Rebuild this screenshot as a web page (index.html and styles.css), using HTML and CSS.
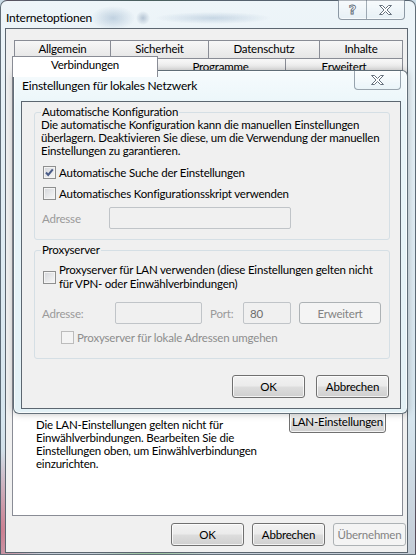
FILE: index.html
```html
<!DOCTYPE html>
<html lang="de">
  <head>
    <meta charset="UTF-8" />
    <title>Internetoptionen</title>
    <link rel="stylesheet" href="styles.css">
  </head>
  <body>
    <div class="window main-window">
      <div class="titlebar">
        <span class="title">Internetoptionen</span>
        <div class="caption-buttons">
          <span class="cap-btn help-btn">?</span>
          <span class="cap-btn close-btn">
            <svg width="13" height="10" viewBox="0 0 13 10"><path d="M0.5 0.5h3l3 3 3-3h3l-4.5 4.5 4.5 4.5h-3l-3-3-3 3h-3l4.5-4.5z" /></svg>
          </span>
        </div>
      </div>
      <div class="client main-client">
        <div class="tab-row row-top">
          <div class="tab t-allgemein">Allgemein</div>
          <div class="tab t-sicherheit">Sicherheit</div>
          <div class="tab t-datenschutz">Datenschutz</div>
          <div class="tab t-inhalte">Inhalte</div>
        </div>
        <div class="tab-row row-bottom">
          <div class="tab active t-verbindungen">Verbindungen</div>
          <div class="tab t-programme">Programme</div>
          <div class="tab t-erweitert">Erweitert</div>
        </div>
        <div class="tab-panel">
          <div class="lan-row">
            <p>Die LAN-Einstellungen gelten nicht für<br>Einwählverbindungen. Bearbeiten Sie die<br>Einstellungen oben, um Einwählverbindungen<br>einzurichten.</p>
            <button class="btn lan-btn">LAN-Einstellungen</button>
          </div>
        </div>
        <div class="button-bar">
          <button class="btn">OK</button>
          <button class="btn">Abbrechen</button>
          <button class="btn" disabled>Übernehmen</button>
        </div>
      </div>
    </div>

    <div class="window lan-dialog">
      <div class="titlebar">
        <span class="title">Einstellungen für lokales Netzwerk</span>
        <span class="lan-close">
          <svg width="13" height="10" viewBox="0 0 13 10"><path d="M0.5 0.5h3l3 3 3-3h3l-4.5 4.5 4.5 4.5h-3l-3-3-3 3h-3l4.5-4.5z" /></svg>
        </span>
      </div>
      <div class="client lan-client">
        <fieldset class="group group-auto">
          <legend>Automatische Konfiguration</legend>
          <p class="desc">Die automatische Konfiguration kann die manuellen Einstellungen<br>überlagern. Deaktivieren Sie diese, um die Verwendung der manuellen<br>Einstellungen zu garantieren.</p>
          <label class="check first">
            <span class="box"><svg width="11" height="11" viewBox="0 0 11 11"><path d="M2 5.5l2.2 2.4 4.6-5.6" /></svg></span>
            <span>Automatische Suche der Einstellungen</span>
          </label>
          <label class="check">
            <span class="box"></span>
            <span>Automatisches Konfigurationsskript verwenden</span>
          </label>
          <div class="field-row">
            <span class="field-label label-script">Adresse</span>
            <input class="field input-script" type="text" disabled>
          </div>
        </fieldset>

        <fieldset class="group group-proxy">
          <legend>Proxyserver</legend>
          <label class="check proxy-check">
            <span class="box"></span>
            <span>Proxyserver für LAN verwenden (diese Einstellungen gelten nicht<br>für VPN- oder Einwählverbindungen)</span>
          </label>
          <div class="field-row proxy-row">
            <span class="field-label label-proxy">Adresse:</span>
            <input class="field input-proxy" type="text" disabled>
            <span class="field-label label-port">Port:</span>
            <input class="field input-port" type="text" value="80" disabled>
            <button class="btn btn-advanced" disabled>Erweitert</button>
          </div>
          <label class="check bypass-check disabled">
            <span class="box"></span>
            <span>Proxyserver für lokale Adressen umgehen</span>
          </label>
        </fieldset>

        <div class="button-bar lan-buttons">
          <button class="btn">OK</button>
          <button class="btn">Abbrechen</button>
        </div>
      </div>
    </div>
  </body>
</html>
```

FILE: styles.css
```css
body {
  margin: 0;
  width: 416px;
  height: 555px;
  overflow: hidden;
  position: relative;
  background: #c9dbe6;
  font-family: Lato, 'Liberation Sans', sans-serif;
  font-size: 11.5px;
  letter-spacing: -0.2px;
  color: #000;
}

.window {
  box-sizing: border-box;
  display: flex;
  flex-direction: column;
  border: 1px solid rgba(38, 52, 66, 0.7);
}

/* glass frame of the main window */
.main-window {
  height: 555px;
  border-radius: 7px 7px 0 0;
  background:
    radial-gradient(ellipse 22px 12px at 112px 17px, rgba(110, 145, 180, 0.35), transparent),
    radial-gradient(ellipse 7px 7px at 142px 17px, rgba(80, 110, 145, 0.35), transparent),
    radial-gradient(ellipse 58px 6px at 212px 17px, rgba(110, 145, 180, 0.3), transparent),
    radial-gradient(ellipse 40px 80px at 0 530px, rgba(205, 105, 125, 0.8), transparent),
    radial-gradient(ellipse 60px 10px at 150px 555px, rgba(120, 190, 110, 0.7), transparent),
    linear-gradient(to bottom, #eef5f9 0, #e4eff5 120px, #d6e5ee 420px, #c4ccd6 555px);
}

.titlebar {
  display: flex;
  align-items: flex-start;
  flex: none;
}

.title {
  flex: 1;
  line-height: 15px;
  font-size: 12px;
}

.main-window .titlebar {
  height: 27px;
  padding-left: 5px;
}

.main-window .title {
  margin-top: 9px;
}

.caption-buttons {
  display: flex;
  margin: -1px 10px 0 0;
  border: 1px solid rgba(60, 78, 96, 0.55);
  border-top: none;
  border-radius: 0 0 4px 4px;
  background: linear-gradient(rgba(255, 255, 255, 0.55), rgba(225, 236, 243, 0.45));
  box-shadow: inset 0 -1px 0 rgba(255, 255, 255, 0.6);
}

.cap-btn {
  height: 19px;
  display: flex;
  align-items: center;
  justify-content: center;
}

.help-btn {
  width: 27px;
  border-right: 1px solid rgba(60, 78, 96, 0.45);
  color: #fff;
  font-family: 'DejaVu Sans', sans-serif;
  font-weight: bold;
  font-size: 13px;
  -webkit-text-stroke: 0.8px #5d6a77;
}

.close-btn {
  width: 37px;
}

.caption-buttons svg path,
.lan-close svg path {
  fill: #fff;
  stroke: #66717d;
  stroke-width: 1;
  stroke-linejoin: round;
}

.client {
  flex: 1;
  min-height: 0;
  overflow: hidden;
  display: flex;
  flex-direction: column;
  border: 1px solid #5c6670;
  background: #f0f0f0;
}

.main-client {
  margin: 0 7px 1px 4px;
  padding: 11px 4px 6px 6px;
}

/* tabs */
.tab-row {
  display: flex;
  align-items: flex-start;
  height: 18px;
  flex: none;
}

.row-top {
  margin-left: 2px;
}

.tab {
  box-sizing: border-box;
  height: 18px;
  border: 1px solid #898c95;
  border-bottom: none;
  margin-left: -1px;
  line-height: 16px;
  text-align: center;
  background: linear-gradient(#f7f7f7, #e6e6e6);
}

.t-allgemein { width: 97px; margin-left: 0; }
.t-sicherheit { width: 99px; }
.t-datenschutz { width: 112px; }
.t-inhalte { width: 84px; }
.t-programme { width: 131px; }
.t-erweitert { width: 118px; }

.tab.active {
  position: relative;
  z-index: 2;
  width: 146px;
  height: 21px;
  margin: -2px -2px -1px 0;
  background: #fff;
}

.tab-panel {
  box-sizing: border-box;
  height: 440px;
  flex: none;
  border: 1px solid #898c95;
  background: #fff;
  padding: 333px 16px 0 23px;
}

.lan-row {
  display: flex;
  justify-content: space-between;
  align-items: flex-start;
}

.lan-row p {
  margin: 8px 0 0;
  line-height: 13px;
}

.btn {
  box-sizing: border-box;
  width: 73px;
  height: 23px;
  padding: 0;
  font: inherit;
  letter-spacing: inherit;
  color: #000;
  border: 1px solid #707070;
  border-radius: 3px;
  background: linear-gradient(#f2f2f2 0%, #ebebeb 48%, #dddddd 52%, #cfcfcf 100%);
  box-shadow: inset 0 0 0 1px rgba(255, 255, 255, 0.75);
}

.btn:disabled {
  border-color: #adb2b5;
  background: #f4f4f4;
  color: #838383;
  box-shadow: none;
}

.lan-btn {
  width: 97px;
}

.button-bar {
  display: flex;
  justify-content: flex-end;
  gap: 8px;
  margin: 7px -3px 0 0;
  flex: none;
}

/* LAN settings dialog on top */
.lan-dialog {
  position: absolute;
  left: 13px;
  top: 70px;
  width: 395px;
  height: 344px;
  border-radius: 6px;
  background: linear-gradient(#f6fbfd 0, #e9f5f9 40px, #e3f1f6 100%);
  box-shadow: 0 0 7px rgba(0, 0, 0, 0.25), inset 0 0 0 1px rgba(255, 255, 255, 0.7);
}

.lan-dialog .titlebar {
  height: 30px;
  padding-left: 8px;
}

.lan-dialog .title {
  margin-top: 7px;
}

.lan-close {
  box-sizing: border-box;
  width: 47px;
  height: 19px;
  margin-right: 6px;
  display: flex;
  align-items: center;
  justify-content: center;
  border: 1px solid rgba(60, 78, 96, 0.5);
  border-top: none;
  border-radius: 0 0 4px 4px;
  background: linear-gradient(rgba(255, 255, 255, 0.6), rgba(228, 240, 246, 0.5));
}

.lan-client {
  margin: 0 6px 4px 7px;
  padding: 4px 10px 10px 12px;
}

.group {
  margin: 0;
  min-width: 0;
  padding: 0 6px 10px 6px;
  border: 1px solid #d5dfe5;
  border-radius: 3px;
}

.group legend {
  padding: 0 1px;
  line-height: 12px;
}

.group-proxy {
  margin-top: 4px;
  padding-bottom: 13px;
}

.desc {
  margin: 0;
  line-height: 13px;
  white-space: nowrap;
}

.check {
  display: flex;
  align-items: center;
  gap: 3px;
  margin: 6px 0 0 2px;
  line-height: 15px;
  white-space: nowrap;
}

.check.first {
  margin-top: 8px;
}

.proxy-check {
  margin-top: 7px;
  line-height: 14px;
}

.bypass-check {
  margin-left: 20px;
}

.check.disabled {
  color: #8d8d8d;
}

.box {
  box-sizing: border-box;
  width: 13px;
  height: 13px;
  flex: none;
  display: flex;
  align-items: center;
  justify-content: center;
  border: 1px solid #8e8f8f;
  background: linear-gradient(135deg, #d4d6da, #f8f8f8);
  box-shadow: inset 0 0 0 1px #f4f4f4;
}

.box svg path {
  fill: none;
  stroke: #4a5c88;
  stroke-width: 2;
}

.check.disabled .box {
  border-color: #bcbcbc;
  background: #f4f4f4;
  box-shadow: none;
}

.field-row {
  display: flex;
  align-items: center;
  margin-top: 6px;
}

.proxy-row {
  margin-top: 11px;
}

.field-label {
  color: #9a9a9a;
}

.label-script {
  width: 67px;
  margin-left: 1px;
}

.label-proxy {
  width: 73px;
  margin-left: 1px;
}

.label-port {
  width: 33px;
  margin-left: 8px;
}

.field {
  box-sizing: border-box;
  height: 22px;
  margin: 0;
  padding: 0 0 0 6px;
  font: inherit;
  letter-spacing: inherit;
  color: #6d6d6d;
  border: 1px solid #c0c4c8;
  border-radius: 2px;
  background: #f0f0f0;
}

.input-script { width: 182px; }
.input-proxy { width: 87px; }
.input-port { width: 48px; }

.btn-advanced {
  width: 82px;
  height: 22px;
  margin-left: 8px;
}

.lan-buttons {
  gap: 11px;
  margin: 16px 1px 0 0;
}
```
